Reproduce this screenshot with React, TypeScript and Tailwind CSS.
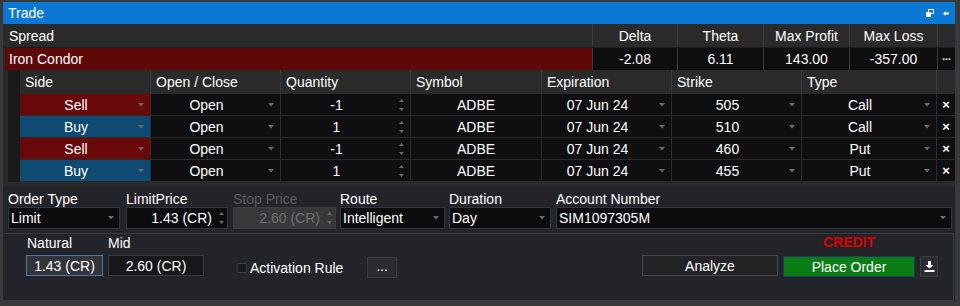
import React from "react";

const Caret = () => (
  <svg width="6" height="4" viewBox="0 0 6 4">
    <path d="M0 0h6L3 3.5z" fill="#6a6a6a" />
  </svg>
);

const Spin = () => (
  <div className="flex flex-col items-center gap-[6px]">
    <svg width="5" height="3" viewBox="0 0 5 3">
      <path d="M0 3h5L2.5 0z" fill="#6a6a6a" />
    </svg>
    <svg width="5" height="3" viewBox="0 0 5 3">
      <path d="M0 0h5L2.5 3z" fill="#6a6a6a" />
    </svg>
  </div>
);

const rows = [
  { side: "Sell", qty: "-1", strike: "505", type: "Call" },
  { side: "Buy", qty: "1", strike: "510", type: "Call" },
  { side: "Sell", qty: "-1", strike: "460", type: "Put" },
  { side: "Buy", qty: "1", strike: "455", type: "Put" },
];

function SelectCell({ w, text, bg }: { w: string; text: string; bg: string }) {
  return (
    <div className={`${w} ${bg} h-full flex items-center border-r border-[#2c2c2e]`}>
      <div className="flex-1 text-center">{text}</div>
      <div className="w-[18px] flex justify-center">
        <Caret />
      </div>
    </div>
  );
}

export default function App() {
  return (
    <div className="w-[960px] h-[306px] bg-[#39393c] pt-[2px] pl-[3px] overflow-hidden font-['Liberation_Sans',Arial,sans-serif] text-[14px] text-white leading-none">
      <div className="w-[952px] flex flex-col">
        {/* Title bar */}
        <div className="h-[22px] bg-[#0a78d4] flex items-center pl-[5px] pr-[6px]">
          <span className="text-[14px]">Trade</span>
          <div className="ml-auto flex items-center gap-[9px]">
            <svg width="8" height="8" viewBox="0 0 8 8">
              <rect x="2.5" y="0.5" width="5" height="4" fill="none" stroke="white" />
              <rect x="0" y="3" width="5" height="5" fill="white" />
            </svg>
            <svg width="6" height="5" viewBox="0 0 6 5">
              <path d="M0 2.5L2.5 0v1.5H6v2H2.5V5z" fill="white" />
            </svg>
          </div>
        </div>

        {/* Table area */}
        <div className="bg-[#2a2a2b] pb-[4px]">
          {/* Spread header */}
          <div className="h-[24px] flex border-b border-[#1c1c1c]">
            <div className="w-[589px] flex items-center pl-[6px]">Spread</div>
            <div className="w-[85px] flex items-center justify-center border-l border-[#3a3a3b]">Delta</div>
            <div className="w-[86px] flex items-center justify-center border-l border-[#3a3a3b]">Theta</div>
            <div className="w-[86px] flex items-center justify-center border-l border-[#3a3a3b]">Max Profit</div>
            <div className="w-[88px] flex items-center justify-center border-l border-[#3a3a3b]">Max Loss</div>
            <div className="w-[18px] border-l border-[#3a3a3b]"></div>
          </div>
          {/* Iron Condor row */}
          <div className="h-[22px] flex">
            <div className="ml-[2px] w-[587px] bg-[#5e0808] flex items-center pl-[4px]">Iron Condor</div>
            <div className="w-[85px] bg-[#0e0e0f] flex items-center justify-center border-l border-[#3a3a3b]">-2.08</div>
            <div className="w-[86px] bg-[#0e0e0f] flex items-center justify-center border-l border-[#3a3a3b]">6.11</div>
            <div className="w-[86px] bg-[#0e0e0f] flex items-center justify-center border-l border-[#3a3a3b]">143.00</div>
            <div className="w-[88px] bg-[#0e0e0f] flex items-center justify-center border-l border-[#3a3a3b]">-357.00</div>
            <div className="w-[18px] bg-[#0e0e0f] flex items-center justify-center border-l border-[#3a3a3b] text-[10px] font-bold pb-[4px]">...</div>
          </div>
          {/* Legs */}
          <div className="ml-[5px] bg-[#1a1a1b] pl-[12px]">
            <div className="h-[24px] flex bg-[#2a2a2b]">
              <div className="w-[131px] flex items-center pl-[5px] border-r border-[#3a3a3b]">Side</div>
              <div className="w-[130px] flex items-center pl-[5px] border-r border-[#3a3a3b]">Open / Close</div>
              <div className="w-[130px] flex items-center pl-[5px] border-r border-[#3a3a3b]">Quantity</div>
              <div className="w-[131px] flex items-center pl-[5px] border-r border-[#3a3a3b]">Symbol</div>
              <div className="w-[130px] flex items-center pl-[5px] border-r border-[#3a3a3b]">Expiration</div>
              <div className="w-[130px] flex items-center pl-[5px] border-r border-[#3a3a3b]">Strike</div>
              <div className="w-[135px] flex items-center pl-[5px] border-r border-[#3a3a3b]">Type</div>
              <div className="w-[18px]"></div>
            </div>
            {rows.map((r, i) => (
              <div key={i} className="h-[22px] flex border-b border-[#2a2a2c]">
                <SelectCell w="w-[131px]" text={r.side} bg={r.side === "Sell" ? "bg-[#6a0909]" : "bg-[#0f4a72]"} />
                <SelectCell w="w-[130px]" text="Open" bg="bg-[#0f0f11]" />
                <div className="w-[130px] bg-[#0f0f11] h-full flex items-center border-r border-[#2c2c2e]">
                  <div className="flex-1 text-center">{r.qty}</div>
                  <div className="w-[18px] flex justify-center">
                    <Spin />
                  </div>
                </div>
                <div className="w-[131px] bg-[#0f0f11] h-full flex items-center justify-center border-r border-[#2c2c2e]">ADBE</div>
                <SelectCell w="w-[130px]" text="07 Jun 24" bg="bg-[#0f0f11]" />
                <SelectCell w="w-[130px]" text={r.strike} bg="bg-[#0f0f11]" />
                <SelectCell w="w-[135px]" text={r.type} bg="bg-[#0f0f11]" />
                <div className="w-[18px] bg-[#0f0f11] h-full flex items-center justify-center text-[13px] font-bold">×</div>
              </div>
            ))}
          </div>
        </div>

        {/* Form area */}
        <div className="bg-[#23242a]">
          <div className="flex pt-[5px] pb-[4px] pl-[5px]">
            <div className="w-[112px] flex flex-col">
              <div className="h-[16px] leading-[16px]">Order Type</div>
              <div className="h-[22px] bg-[#0c0c0e] border border-[#35363b] flex items-center pl-[2px]">
                <span className="flex-1">Limit</span>
                <span className="w-[16px] flex justify-center"><Caret /></span>
              </div>
            </div>
            <div className="ml-[6px] w-[102px] flex flex-col">
              <div className="h-[16px] leading-[16px]">LimitPrice</div>
              <div className="h-[22px] bg-[#0c0c0e] border border-[#35363b] flex items-center">
                <span className="flex-1 text-right pr-[4px]">1.43 (CR)</span>
                <span className="w-[11px] flex justify-center"><Spin /></span>
              </div>
            </div>
            <div className="ml-[5px] w-[103px] flex flex-col">
              <div className="h-[16px] leading-[16px] text-[#5a5b60]">Stop Price</div>
              <div className="h-[22px] bg-[#38383b] border border-[#3c3d42] flex items-center text-[#707073]">
                <span className="flex-1 text-right pr-[4px]">2.60 (CR)</span>
                <span className="w-[11px] flex justify-center"><Spin /></span>
              </div>
            </div>
            <div className="ml-[4px] w-[105px] flex flex-col">
              <div className="h-[16px] leading-[16px]">Route</div>
              <div className="h-[22px] bg-[#0c0c0e] border border-[#35363b] flex items-center pl-[2px]">
                <span className="flex-1">Intelligent</span>
                <span className="w-[16px] flex justify-center"><Caret /></span>
              </div>
            </div>
            <div className="ml-[4px] w-[102px] flex flex-col">
              <div className="h-[16px] leading-[16px]">Duration</div>
              <div className="h-[22px] bg-[#0c0c0e] border border-[#35363b] flex items-center pl-[2px]">
                <span className="flex-1">Day</span>
                <span className="w-[16px] flex justify-center"><Caret /></span>
              </div>
            </div>
            <div className="ml-[5px] w-[396px] flex flex-col">
              <div className="h-[16px] leading-[16px]">Account Number</div>
              <div className="h-[22px] bg-[#0c0c0e] border border-[#35363b] flex items-center pl-[2px]">
                <span className="flex-1">SIM1097305M</span>
                <span className="w-[16px] flex justify-center"><Caret /></span>
              </div>
            </div>
          </div>

          <div className="h-[68px] w-[951px] border-t border-r border-b border-[#3a3b40] flex">
            <div className="ml-[23px] w-[77px] flex flex-col pt-[1px]">
              <div className="h-[16px] leading-[16px] pl-[1px]">Natural</div>
              <div className="mt-[4px] h-[21px] bg-[#33353b] border border-[#4a78a8] flex items-center justify-center">1.43 (CR)</div>
            </div>
            <div className="ml-[5px] w-[96px] flex flex-col pt-[1px]">
              <div className="h-[16px] leading-[16px]">Mid</div>
              <div className="mt-[4px] h-[21px] bg-[#18181b] border border-[#3a3b40] flex items-center justify-center">2.60 (CR)</div>
            </div>
            <div className="ml-[33px] w-[130px] flex items-center h-[16px] mt-[26px]">
              <div className="w-[10px] h-[10px] bg-[#1a1a1d] border border-[#3a3b40]"></div>
              <span className="ml-[3px]">Activation Rule</span>
            </div>
            <div className="mt-[23px] w-[30px] h-[21px] bg-[#2a2b2f] border border-[#3a3b40] flex items-center justify-center pb-[4px]">...</div>
            <div className="ml-auto mr-[15px] flex items-start">
              <div className="mt-[21px] w-[136px] h-[21px] bg-[#232325] border border-[#46474b] flex items-center justify-center">Analyze</div>
              <div className="ml-[5px] w-[132px] flex flex-col items-center">
                <div className="h-[16px] leading-[16px] text-[#dd0000] font-bold text-[14px]">CREDIT</div>
                <div className="mt-[6px] w-[132px] h-[21px] bg-[#0b7d16] border border-[#1a3a6a] flex items-center justify-center">Place Order</div>
              </div>
              <div className="ml-[5px] mt-[22px] w-[18px] h-[21px] bg-[#2a2b2f] border border-[#3a3b40] flex items-center justify-center">
                <svg width="11" height="11" viewBox="0 0 11 11">
                  <path d="M4 0h3v4h2.5L5.5 7.5 1.5 4H4z" fill="white" />
                  <rect x="0.5" y="9" width="10" height="2" fill="white" />
                </svg>
              </div>
            </div>
          </div>
        </div>
      </div>
    </div>
  );
}
